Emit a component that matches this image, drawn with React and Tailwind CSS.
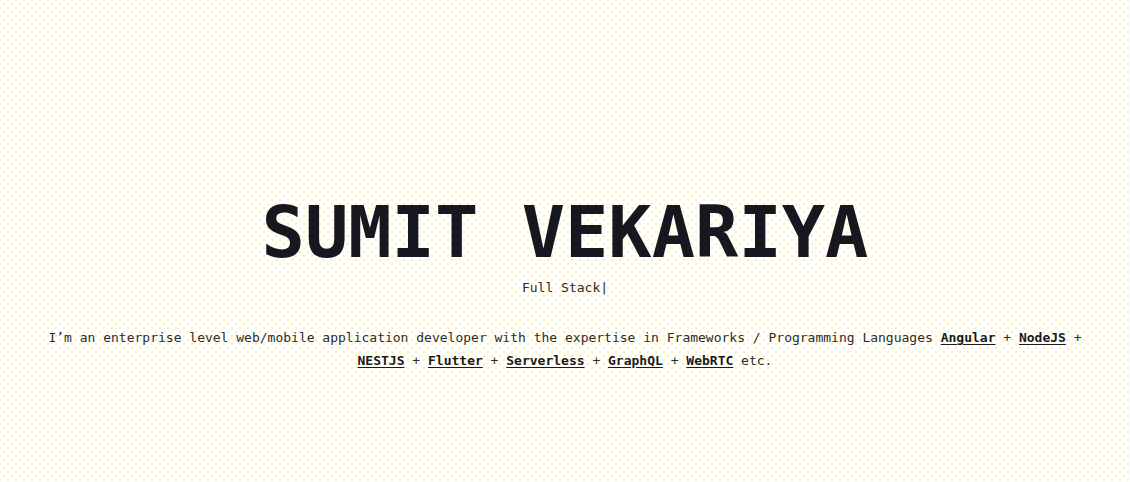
export default function App() {
  const skills = ["Angular", "NodeJS", "NESTJS", "Flutter", "Serverless", "GraphQL", "WebRTC"];

  return (
    <div
      className="min-h-screen w-full bg-white bg-[radial-gradient(circle,#fde047_0.5px,transparent_0.9px),radial-gradient(circle,#fde047_0.5px,transparent_0.9px)] bg-[size:8px_8px] bg-[position:0_0,4px_4px] text-[#1c1c1c]"
      style={{ fontFamily: '"DejaVu Sans Mono", "Liberation Mono", monospace' }}
    >
      <div className="flex flex-col items-center px-12 pt-[196px] text-center">
        <h1 className="text-[72px] font-bold leading-none tracking-normal text-[#171720]">
          SUMIT VEKARIYA
        </h1>
        <p className="mt-[10px] text-[13px] leading-5 text-[#2b2b2b]">
          Full Stack<span className="font-light">|</span>
        </p>
        <p className="mt-[28px] text-[13px] leading-[23px] text-[#2b2b2b]">
          I’m an enterprise level web/mobile application developer with the expertise in Frameworks / Programming Languages{" "}
          {skills.map((s, i) => (
            <span key={s}>
              <a href="#" className="font-bold text-[#1a1a1a] underline underline-offset-2">
                {s}
              </a>
              {i < skills.length - 1 ? " + " : " etc."}
            </span>
          ))}
        </p>
      </div>
    </div>
  );
}
